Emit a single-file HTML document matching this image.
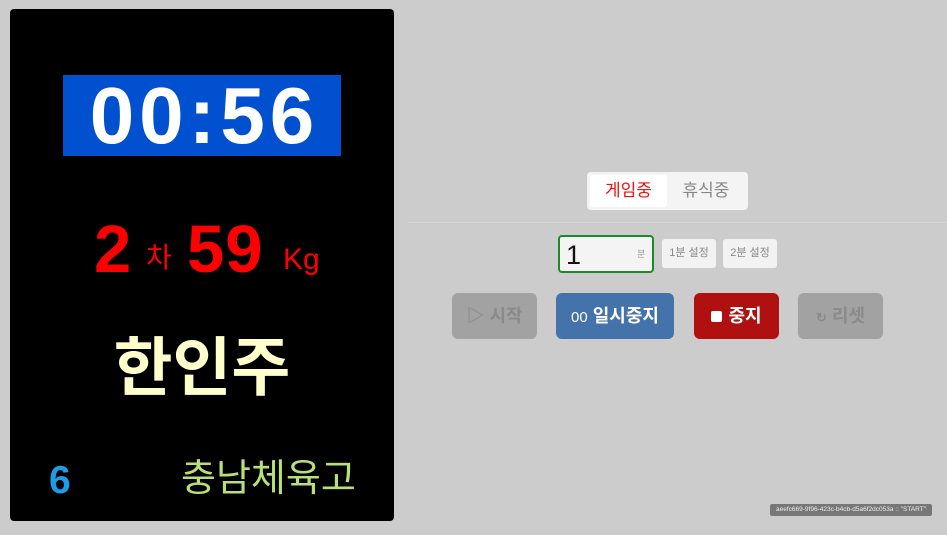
<!DOCTYPE html><html><head><meta charset="utf-8"><style>
body{margin:0;width:947px;height:535px;background:#cccccc;font-family:"Liberation Sans","Noto Sans CJK KR",sans-serif;position:relative;overflow:hidden}
.a{position:absolute;white-space:nowrap}
.panel{left:10px;top:9px;width:384px;height:512px;background:#000;border-radius:4px}
.timer{left:63px;top:75px;width:278px;height:81px;background:#0050d0;color:#fff;font-weight:bold;font-size:80px;letter-spacing:5px;text-indent:5px;line-height:81px;text-align:center}
.btn{position:absolute;top:293px;height:46px;border-radius:6px;font-weight:bold;font-size:18px;line-height:46px;text-align:center;color:#fff}
.sm{position:absolute;top:239px;width:54px;height:29px;background:#f2f2f2;border-radius:3px;font-size:11px;color:#888;line-height:29px;text-align:center}
.r{color:#ff0000;font-weight:bold}
</style></head><body>
<div class="a panel"></div>
<div class="a timer">00:56</div>
<div class="a r" style="left:94px;top:212px;font-size:67px;line-height:76px">2</div>
<div class="a r" style="left:146px;top:238px;font-size:28px;line-height:40px;font-weight:normal">차</div>
<div class="a r" style="left:187px;top:212px;font-size:67px;line-height:76px;letter-spacing:1px">59</div>
<div class="a r" style="left:283px;top:240px;font-size:30px;line-height:40px;font-weight:normal">Kg</div>
<div class="a" style="left:0;width:404px;top:328px;text-align:center;color:#ffffcc;font-weight:bold;font-size:64px;line-height:80px">한인주</div>
<div class="a" style="left:49px;top:458px;color:#1a9ee8;font-weight:bold;font-size:39px;line-height:46px">6</div>
<div class="a" style="left:181px;top:455px;color:#b8e07a;font-size:38px;line-height:48px">충남체육고</div>

<div class="a" style="left:587px;top:172px;width:161px;height:38px;background:#f4f4f4;border-radius:4px"></div>
<div class="a" style="left:590px;top:175px;width:77px;height:32px;background:#fff;border-radius:3px;color:#ee1111;font-size:17px;line-height:32px;text-align:center">게임중</div>
<div class="a" style="left:667px;top:175px;width:78px;height:32px;color:#888;font-size:17px;line-height:32px;text-align:center">휴식중</div>
<div class="a" style="left:408px;top:222px;width:539px;height:1px;background:#d6d6d6"></div>
<div class="a" style="left:558px;top:235px;width:92px;height:34px;border:2px solid #1a8a2a;border-radius:4px;background:#f4f4f4"></div>
<div class="a" style="left:566px;top:238px;font-size:27px;line-height:34px;color:#111">1</div>
<div class="a" style="left:637px;top:247px;font-size:9px;color:#999">분</div>
<div class="sm" style="left:662px">1분 설정</div>
<div class="sm" style="left:723px">2분 설정</div>
<div class="btn" style="left:452px;width:85px;background:#a2a2a2;color:#8a8a8a">▷ 시작</div>
<div class="btn" style="left:556px;width:118px;background:#4472aa"><span style="font-weight:normal;font-size:15px">00</span> 일시중지</div>
<div class="btn" style="left:694px;width:85px;background:#b01010"><span style="display:inline-block;width:11px;height:11px;background:#fff;border-radius:2px;margin-right:6px"></span>중지</div>
<div class="btn" style="left:798px;width:85px;background:#a2a2a2;color:#8a8a8a"><span style="font-size:13px">↻</span> 리셋</div>
<div class="a" style="left:770px;top:504px;width:162px;height:12px;background:#777;border-radius:2px;color:#eee;font-size:6.5px;line-height:12px;text-align:center">aeefc669-9f96-423c-b4cb-d5a6f2dc053a :: "START"</div>
</body></html>
